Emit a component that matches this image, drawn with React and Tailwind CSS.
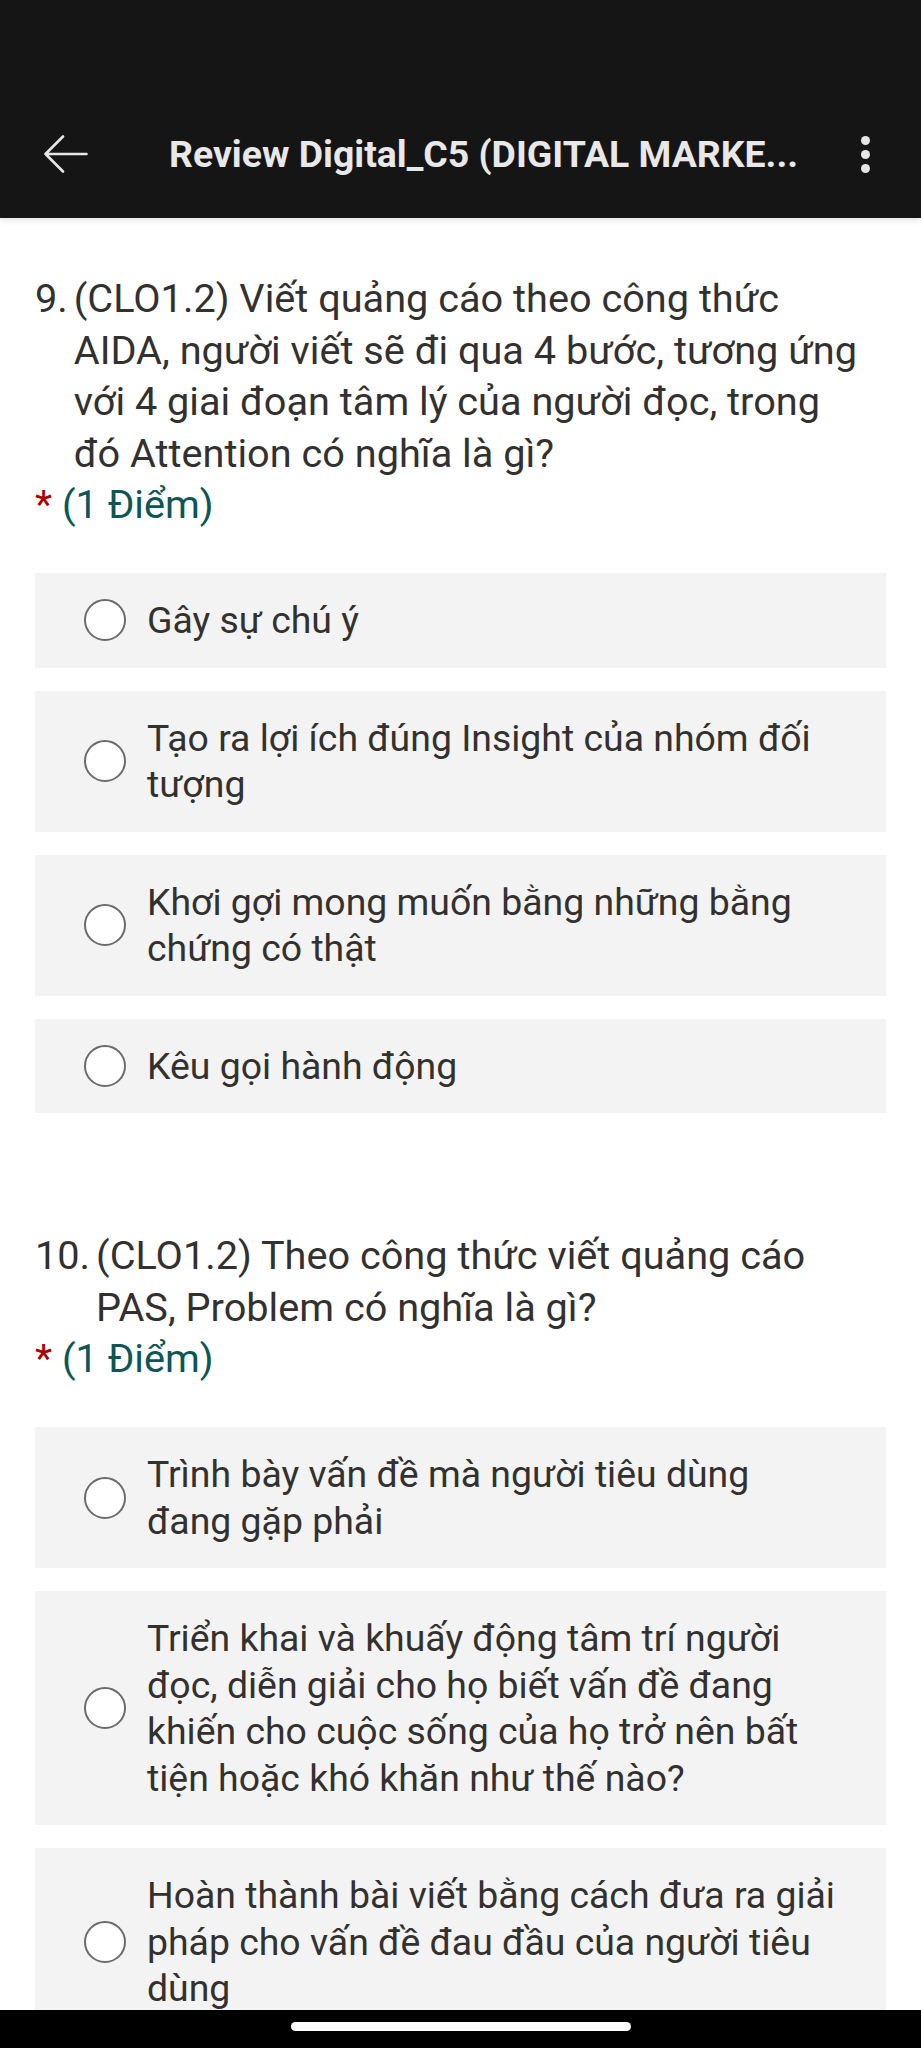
import React from 'react';

const questions = [
  {
    num: '9.',
    text: 'Viết quảng cáo theo công thức AIDA, người viết sẽ đi qua 4 bước, tương ứng với 4 giai đoạn tâm lý của người đọc, trong đó Attention có nghĩa là gì?',
    options: [
      'Gây sự chú ý',
      'Tạo ra lợi ích đúng Insight của nhóm đối tượng',
      'Khơi gợi mong muốn bằng những bằng chứng có thật',
      'Kêu gọi hành động',
    ],
  },
  {
    num: '10.',
    text: 'Theo công thức viết quảng cáo PAS, Problem có nghĩa là gì?',
    options: [
      'Trình bày vấn đề mà người tiêu dùng đang gặp phải',
      'Triển khai và khuấy động tâm trí người đọc, diễn giải cho họ biết vấn đề đang khiến cho cuộc sống của họ trở nên bất tiện hoặc khó khăn như thế nào?',
      'Hoàn thành bài viết bằng cách đưa ra giải pháp cho vấn đề đau đầu của người tiêu dùng',
    ],
  },
];

function Question({ q, first }) {
  return (
    <div className={first ? 'mt-[55px]' : 'mt-[117px]'}>
      <div className="flex gap-[6px] pr-[20px] text-[39.7px] leading-[51.5px] text-[#323130]">
        <span className="shrink-0">{q.num}</span>
        <span>(CLO1.2) {q.text}</span>
      </div>
      <p className="text-[39.7px] leading-[51.5px]">
        <span className="text-[#a80000]">*</span>{' '}
        <span className="text-[#0d5656]">(1 Điểm)</span>
      </p>
      <div className="mt-[42.5px] flex flex-col gap-[23px]">
        {q.options.map((opt) => (
          <label
            key={opt}
            className="flex items-center bg-[#f3f3f3] pl-[49px] pr-[46px] py-[24px]"
          >
            <span className="shrink-0 w-[42px] h-[42px] rounded-full border-2 border-[#6b6b6b] bg-white" />
            <span className="ml-[21px] text-[37.4px] leading-[46.5px] text-[#323130]">{opt}</span>
          </label>
        ))}
      </div>
    </div>
  );
}

export default function App() {
  return (
    <div className="w-[921px] h-[2048px] flex flex-col overflow-hidden bg-white font-[Roboto,'Noto_Sans',sans-serif]">
      <header className="shrink-0 h-[218px] bg-[#151515] pt-[100px] shadow-[0_2px_6px_rgba(0,0,0,0.12)] relative z-10">
        <div className="h-[108px] flex items-center">
          <svg width="44" height="38" viewBox="0 0 44 38" className="ml-[44px] shrink-0" fill="none" stroke="#e6e6e6" strokeWidth="2.6" strokeLinecap="round" strokeLinejoin="round">
            <path d="M1.5 19 H42.5 M19 1.5 L1.5 19 L19 36.5" />
          </svg>
          <h1 className="ml-[81px] text-[37.4px] font-bold text-[#e8e8e8] whitespace-nowrap">
            Review Digital_C5 (DIGITAL MARKE...
          </h1>
          <div className="ml-auto mr-[51px] flex flex-col gap-[5px]">
            <span className="w-[9px] h-[9px] rounded-full bg-[#e6e6e6]" />
            <span className="w-[9px] h-[9px] rounded-full bg-[#e6e6e6]" />
            <span className="w-[9px] h-[9px] rounded-full bg-[#e6e6e6]" />
          </div>
        </div>
      </header>

      <main className="flex-1 overflow-hidden px-[35px]">
        {questions.map((q, i) => (
          <Question key={q.num} q={q} first={i === 0} />
        ))}
      </main>

      <div className="shrink-0 h-[38px] bg-black flex justify-center pt-[12px]">
        <div className="w-[340px] h-[9px] rounded-full bg-white" />
      </div>
    </div>
  );
}
